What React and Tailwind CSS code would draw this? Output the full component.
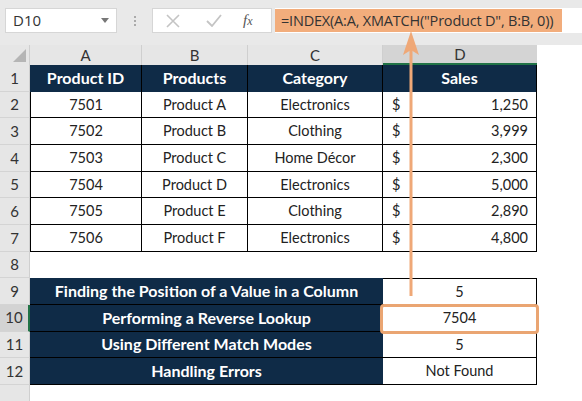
import React from 'react';

const products = [
  { id: '7501', name: 'Product A', category: 'Electronics', sales: '1,250' },
  { id: '7502', name: 'Product B', category: 'Clothing', sales: '3,999' },
  { id: '7503', name: 'Product C', category: 'Home Décor', sales: '2,300' },
  { id: '7504', name: 'Product D', category: 'Electronics', sales: '5,000' },
  { id: '7505', name: 'Product E', category: 'Clothing', sales: '2,890' },
  { id: '7506', name: 'Product F', category: 'Electronics', sales: '4,800' },
];

const lookups = [
  { label: 'Finding the Position of a Value in a Column', value: '5' },
  { label: 'Performing a Reverse Lookup', value: '7504' },
  { label: 'Using Different Match Modes', value: '5' },
  { label: 'Handling Errors', value: 'Not Found' },
];

const navy = 'bg-[#0f2b47]';

function RowHead({ n, active }) {
  return (
    <div
      className={`w-[30px] shrink-0 flex items-center justify-center text-[15px] text-[#333] border-b border-[#d4d4d4] ${
        active ? 'bg-[#d3d3d3] border-r-2 border-r-[#217346]' : 'bg-[#e6e6e6] border-r border-r-[#cfcfcf]'
      }`}
    >
      {n}
    </div>
  );
}

function Row({ n, active, children }) {
  return (
    <div className="flex h-[26.67px]">
      <RowHead n={n} active={active} />
      <div className="flex w-[507px]">{children}</div>
      <div className="flex-1 bg-white" />
    </div>
  );
}

export default function App() {
  return (
    <div
      className="relative w-[582px] h-[401px] overflow-hidden bg-white text-[#222]"
      style={{ fontFamily: 'Lato, "Open Sans", sans-serif' }}
    >
      {/* toolbar */}
      <div className="h-[45px] bg-[#e9e9e9] flex items-start pt-[8px] pl-[5px]">
        <div className="w-[112px] h-[25px] bg-white border border-[#d6d6d6] flex items-center justify-between px-[7px] text-[15px] text-[#333]" style={{ fontFamily: '"Open Sans", sans-serif' }}>
          <span>D10</span>
          <svg width="8" height="5" viewBox="0 0 8 5"><path d="M0 0h8L4 5z" fill="#777" /></svg>
        </div>
        <div className="w-[35px] h-[25px] flex flex-col items-center justify-center gap-[2px]">
          <span className="w-[2px] h-[2px] bg-[#aaa]" />
          <span className="w-[2px] h-[2px] bg-[#aaa]" />
          <span className="w-[2px] h-[2px] bg-[#aaa]" />
        </div>
        <div className="w-[120px] h-[25px] bg-white border border-[#d6d6d6] flex items-center">
          <svg className="ml-[13px]" width="14" height="14" viewBox="0 0 14 14">
            <path d="M1 1l12 12M13 1L1 13" stroke="#c4c4c4" strokeWidth="1.6" />
          </svg>
          <svg className="ml-[26px]" width="16" height="13" viewBox="0 0 16 13">
            <path d="M1 7l5 5L15 1" stroke="#c4c4c4" strokeWidth="1.8" fill="none" />
          </svg>
          <span className="ml-[21px] italic text-[15px] text-[#555]" style={{ fontFamily: '"Liberation Serif", serif' }}>
            f<span className="text-[12px]">x</span>
          </span>
        </div>
        <div className="flex-1 h-[25px] bg-white ml-[3px] flex items-center">
          <div className="w-[287px] h-[23px] bg-[#f2ad7c] flex items-center pl-[6px] text-[14.5px] text-[#333] whitespace-nowrap" style={{ fontFamily: '"Open Sans", sans-serif', letterSpacing: '-0.2px' }}>
            =INDEX(A:A, XMATCH("Product D", B:B, 0))
          </div>
        </div>
      </div>

      {/* column headers */}
      <div className="flex h-[20px] text-[15px] text-[#333]">
        <div className="w-[30px] bg-[#e6e6e6] border-r border-[#cfcfcf] relative">
          <svg className="absolute right-[3px] bottom-[3px]" width="13" height="13" viewBox="0 0 13 13">
            <path d="M13 0v13H0z" fill="#b5b5b5" />
          </svg>
        </div>
        <div className="w-[112px] bg-[#e6e6e6] border-r border-[#cfcfcf] flex items-center justify-center">A</div>
        <div className="w-[106px] bg-[#e6e6e6] border-r border-[#cfcfcf] flex items-center justify-center">B</div>
        <div className="w-[135px] bg-[#e6e6e6] border-r border-[#cfcfcf] flex items-center justify-center">C</div>
        <div className="w-[154px] bg-[#d4d4d4] border-b-2 border-[#217346] flex items-center justify-center">D</div>
        <div className="flex-1 bg-white" />
      </div>

      {/* row 1 */}
      <Row n={1}>
        {['Product ID', 'Products', 'Category'].map((h, i) => (
          <div
            key={h}
            className={`${navy} text-white font-bold text-[16px] flex items-center justify-center border-r border-black ${
              i === 0 ? 'w-[112px]' : i === 1 ? 'w-[106px]' : 'w-[135px]'
            }`}
          >
            {h}
          </div>
        ))}
        <div className={`${navy} text-white font-bold text-[16px] w-[154px] flex items-center justify-center border-r border-black`}>Sales</div>
      </Row>

      {products.map((p, i) => (
        <Row key={p.id} n={i + 2}>
          <div className="w-[112px] bg-white border-r border-b border-black border-l flex items-center justify-center text-[14.5px]">{p.id}</div>
          <div className="w-[106px] bg-white border-r border-b border-black flex items-center justify-center text-[14.5px]">{p.name}</div>
          <div className="w-[135px] bg-white border-r border-b border-black flex items-center justify-center text-[14.5px]">{p.category}</div>
          <div className="w-[154px] bg-white border-r border-b border-black flex items-center justify-between pl-[9px] pr-[8px] text-[14.5px]">
            <span>$</span>
            <span>{p.sales}</span>
          </div>
        </Row>
      ))}

      <Row n={8}>
        <div className="w-[507px] bg-white" />
      </Row>

      {lookups.map((l, i) => (
        <Row key={l.label} n={i + 9} active={i === 1}>
          <div className={`w-[353px] ${navy} text-white font-bold text-[16px] flex items-center justify-center border-b border-black`}>
            {l.label}
          </div>
          <div className={`w-[154px] bg-white border-r border-black border-b flex items-center justify-center text-[14.5px] ${i === 0 ? 'border-t' : ''}`}>
            {l.value}
          </div>
        </Row>
      ))}

      <div className="flex h-[20px]">
        <div className="w-[30px] bg-[#e6e6e6] border-r border-[#cfcfcf]" />
        <div className="flex-1 bg-white" />
      </div>

      {/* arrow from result to formula */}
      <svg className="absolute left-[402px] top-[31px]" width="18" height="266" viewBox="0 0 18 266">
        <path d="M9 18V265" stroke="#efa877" strokeWidth="3" />
        <path d="M9 0L1 24L9 19L17 24Z" fill="#efa877" />
      </svg>

      {/* highlighted result */}
      <div className="absolute left-[380px] top-[304px] w-[159px] h-[30px] border-[3px] border-[#eaa572] rounded-[4px]" />
    </div>
  );
}
